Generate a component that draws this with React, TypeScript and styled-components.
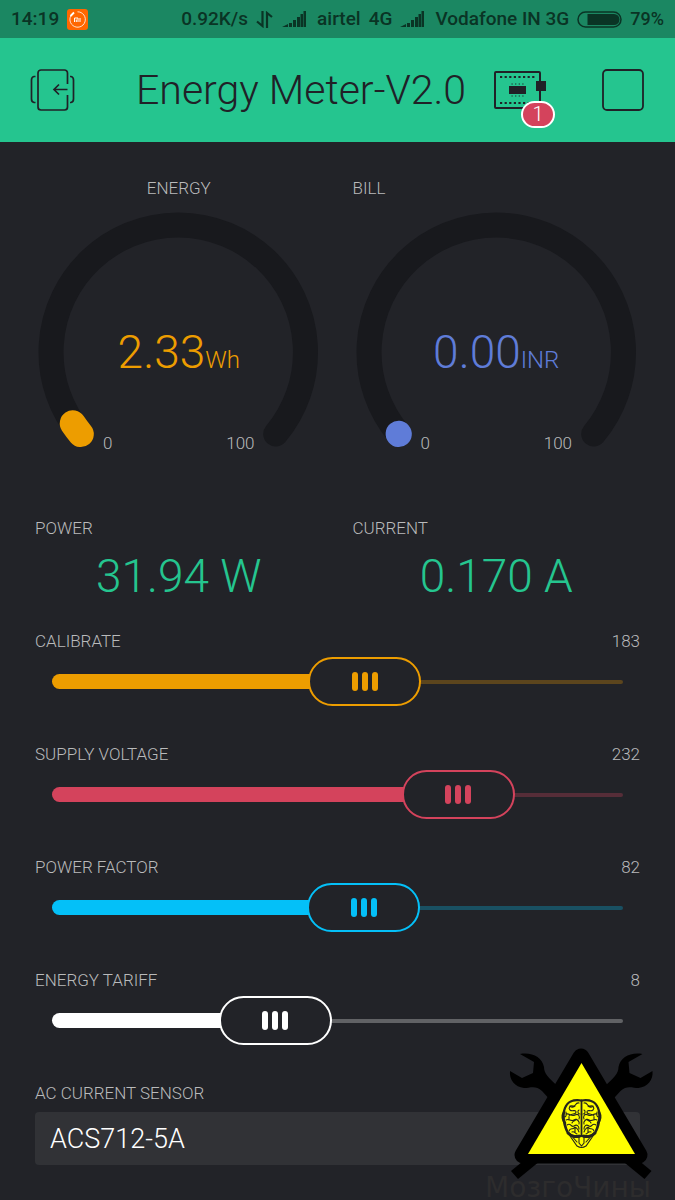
import React, { useState } from "react";
import styled, { createGlobalStyle } from "styled-components";

const GlobalStyle = createGlobalStyle`
  *, *::before, *::after { box-sizing: border-box; }
  body {
    margin: 0;
    background: #222328;
    font-family: Roboto, "Liberation Sans", sans-serif;
    font-weight: 300;
    color: #b9babb;
  }
  button { padding: 0; border: 0; background: none; color: inherit; font: inherit; cursor: pointer; }
`;

const Screen = styled.div`
  position: relative;
  min-height: 100vh;
  display: flex;
  flex-direction: column;
  overflow: hidden;
`;

const StatusBar = styled.div`
  display: flex;
  align-items: center;
  justify-content: space-between;
  height: 38px;
  padding: 0 11px;
  background: #1b8762;
  color: #0a3425;
  font-size: 19px;
  font-weight: 500;
  line-height: 24px;
  white-space: nowrap;
`;

const StatusGroup = styled.div`
  display: flex;
  align-items: center;
  gap: 8px;
  svg { display: block; flex: none; }
`;

const BatteryLevel = styled.span`
  font-size: 18px;
`;

const Header = styled.header`
  display: flex;
  align-items: center;
  height: 104px;
  padding: 0 31px 0 30px;
  background: #25c58f;
  color: #202127;
  svg { display: block; }
`;

const Title = styled.h1`
  flex: 1;
  margin: 0;
  text-align: right;
  font-size: 41px;
  line-height: 56px;
  font-weight: 300;
  white-space: nowrap;
`;

const HeaderButton = styled.button`
  flex: none;
`;

const DeviceButton = styled.button`
  position: relative;
  flex: none;
  margin: 0 56px 0 28px;
`;

const Badge = styled.span`
  position: absolute;
  right: -9px;
  bottom: -19px;
  width: 34px;
  height: 27px;
  border: 2px solid #fff;
  border-radius: 14px;
  background: #d4435c;
  color: #fff;
  font-size: 20px;
  line-height: 23px;
  text-align: center;
`;

const Main = styled.main`
  flex: 1;
  padding: 32px 35px 0;
`;

const Pair = styled.div`
  display: grid;
  grid-template-columns: 1fr 1fr;
  column-gap: 30px;
`;

const Label = styled.div<{ $center?: boolean }>`
  font-size: 17px;
  line-height: 28px;
  text-align: ${(p) => (p.$center ? "center" : "left")};
`;

const GaugeBox = styled.section`
  height: 340px;
`;

const Dial = styled.div`
  display: grid;
  padding-top: 10px;
  > * { grid-area: 1 / 1; }
  svg { display: block; width: 100%; }
`;

const Reading = styled.div<{ $color: string }>`
  align-self: center;
  padding-top: 42px;
  text-align: center;
  color: ${(p) => p.$color};
  font-size: 46px;
  line-height: 56px;
  white-space: nowrap;
  small { font-size: 24px; }
`;

const Scale = styled.div`
  align-self: end;
  display: flex;
  justify-content: space-between;
  padding: 0 68px 2px;
  font-size: 17px;
  line-height: 24px;
`;

const ValueBox = styled.section`
  height: 113px;
`;

const Value = styled.div`
  padding-top: 4px;
  text-align: center;
  color: #25c58f;
  font-size: 46px;
  line-height: 60px;
  white-space: nowrap;
`;

const SliderBox = styled.section`
  height: 113px;
`;

const SliderHead = styled.div`
  display: flex;
  justify-content: space-between;
  font-size: 17px;
  line-height: 28px;
`;

const Track = styled.div`
  display: grid;
  align-items: center;
  margin: 2px 17px 0;
  > * { grid-area: 1 / 1; }
`;

const Rail = styled.span<{ $color: string }>`
  height: 4px;
  border-radius: 2px;
  background: ${(p) => p.$color};
`;

const Fill = styled.span<{ $color: string }>`
  height: 15px;
  border-radius: 8px;
  background: ${(p) => p.$color};
`;

const Range = styled.input<{ $color: string }>`
  appearance: none;
  width: 100%;
  height: 49px;
  margin: 0;
  background: transparent;
  cursor: pointer;
  &::-webkit-slider-thumb {
    appearance: none;
    width: 113px;
    height: 49px;
    border: 2px solid ${(p) => p.$color};
    border-radius: 25px;
    background: #222328;
  }
  &::-moz-range-thumb {
    width: 113px;
    height: 49px;
    border: 2px solid ${(p) => p.$color};
    border-radius: 25px;
    background: #222328;
  }
`;

const Grip = styled.span<{ $color: string }>`
  z-index: 1;
  display: flex;
  justify-content: center;
  gap: 4px;
  width: 113px;
  pointer-events: none;
  i {
    width: 6px;
    height: 19px;
    border-radius: 3px;
    background: ${(p) => p.$color};
  }
`;

const SelectLabel = styled.label`
  display: block;
  font-size: 17px;
  line-height: 28px;
`;

const Select = styled.select`
  appearance: none;
  display: block;
  width: 100%;
  height: 53px;
  margin-top: 5px;
  padding: 0 15px;
  border: 0;
  border-radius: 4px;
  background: #313236;
  color: #fff;
  font: inherit;
  font-size: 27px;
`;

const Stamp = styled.div`
  position: absolute;
  right: 0;
  bottom: 0;
  width: 195px;
  height: 160px;
  pointer-events: none;
  svg { display: block; }
`;

const StampText = styled.div`
  position: absolute;
  left: 5px;
  bottom: 0;
  color: #2d2c2d;
  font-family: "DejaVu Sans", sans-serif;
  font-weight: 400;
  font-size: 28px;
  line-height: 24px;
  white-space: nowrap;
`;

const Signal = () => (
  <svg width="27" height="17" viewBox="0 0 27 17" fill="currentColor" aria-hidden="true">
    <path d="M0 16L6 13V16ZM7 12h3v4H7ZM11 9h3v7h-3ZM15 6h3v10h-3ZM18.500 3h2.500v13h-2.500ZM21.500 0h2.500v16h-2.500Z" />
  </svg>
);

const polar = (deg: number) => {
  const a = (deg * Math.PI) / 180;
  return `${143 + 127 * Math.cos(a)} ${140 + 127 * Math.sin(a)}`;
};

type GaugeProps = { label: string; value: string; unit: string; color: string; sweep: number; centered?: boolean };

function Gauge({ label, value, unit, color, sweep, centered }: GaugeProps) {
  const start = 140;
  return (
    <GaugeBox>
      <Label $center={centered}>{label}</Label>
      <Dial>
        <svg viewBox="0 0 287 245" fill="none" strokeWidth="25" strokeLinecap="round" aria-hidden="true">
          <path d={`M${polar(start)}A127 127 0 1 1 ${polar(40)}`} stroke="#18191d" />
          <path d={`M${polar(start)}A127 127 0 0 1 ${polar(start + sweep)}`} stroke={color} strokeWidth="26" />
        </svg>
        <Reading $color={color}>{value}<small>{unit}</small></Reading>
        <Scale><span>0</span><span>100</span></Scale>
      </Dial>
    </GaugeBox>
  );
}

type SliderProps = { id: string; label: string; initial: number; max: number; color: string; dim: string };

function Slider({ id, label, initial, max, color, dim }: SliderProps) {
  const [value, setValue] = useState(initial);
  const offset = `calc((100% - 113px) * ${value / max})`;
  return (
    <SliderBox>
      <SliderHead>
        <label htmlFor={id}>{label}</label>
        <output htmlFor={id}>{value}</output>
      </SliderHead>
      <Track>
        <Rail $color={dim} />
        <Fill $color={color} style={{ width: `calc(${offset} + 12px)` }} />
        <Range id={id} type="range" min={0} max={max} value={value} $color={color}
          onChange={(e) => setValue(Number(e.target.value))} />
        <Grip $color={color} style={{ marginLeft: offset }}><i /><i /><i /></Grip>
      </Track>
    </SliderBox>
  );
}

const BrainHalf = () => (
  <g>
    <path d="M101.500 60.500C93 59 87 62 85 68C82 75 84 87 88 93C91 97 97 98 101 96" strokeWidth="2.200" />
    <path d="M84 72C82 76 83 80 85 83" strokeWidth="2.600" />
    <path d="M88 93C92 97 97 97 99 96" strokeWidth="3" />
    <path d="M99 63c-4-1-3 4-6 3s-5 2-3 4 6-1 6 2-5 1-7 4M99 70c-2 1-1 4 1 4M86 74c4-1 5 3 9 1s5 2 4 4M86 80c3-2 5 2 8 0s6 2 5 4M87 85c4-3 4 3 7 1s5 0 5 3M89 91c1-4 4-1 5-3s4 1 5 4M92 92c2-1 3 1 5 2M90 66c1 2 4 1 5 0M84 77c3 0 2-3 2-5M96 79c-1 3-3 1-4 4M89 77v3M95 88v4" />
  </g>
);

export default function App() {
  return (
    <Screen>
      <GlobalStyle />
      <StatusBar>
        <StatusGroup>
          <span>14:19</span>
          <svg width="21" height="21" viewBox="0 0 21 21" fill="none" stroke="#fff" aria-hidden="true">
            <rect width="21" height="21" rx="3" fill="#ff6700" stroke="none" />
            <path d="M6.500 4A7.700 7.700 0 1 0 10.500 2.800" strokeWidth=".8" />
            <path d="M3.500 7L7 3.500" strokeWidth="1.800" />
            <path d="M7.500 13V9h3.500v4M9.300 10.500V13M13 9v4" />
          </svg>
        </StatusGroup>
        <StatusGroup>
          <span>0.92K/s</span>
          <svg width="18" height="17" viewBox="0 0 18 17" fill="none" stroke="currentColor" strokeWidth="2.200" aria-hidden="true">
            <path d="M6.500 0V15L1 10.500M11 17V2L16 6" />
          </svg>
          <Signal />
          <span>airtel</span>
          <span>4G</span>
          <Signal />
          <span>Vodafone IN 3G</span>
          <svg width="45" height="17" viewBox="0 0 45 17" aria-hidden="true">
            <rect x="1" y="1" width="43" height="15" rx="7.500" fill="none" stroke="currentColor" strokeWidth="1.500" />
            <path d="M10.500 3H37a5.500 5.500 0 0 1 0 11H10.500Z" fill="currentColor" />
          </svg>
          <BatteryLevel>79%</BatteryLevel>
        </StatusGroup>
      </StatusBar>

      <Header>
        <HeaderButton type="button" aria-label="Exit project">
          <svg width="46" height="42" viewBox="0 0 46 42" fill="none" stroke="currentColor" strokeWidth="1.700">
            <path d="M37.500 15V4a3 3 0 0 0-3-3H11a3 3 0 0 0-3 3v34a3 3 0 0 0 3 3h23.500a3 3 0 0 0 3-3V26M37.500 20.500H24M29 15.500l-5 5 5 5" />
            <path d="M5.500 7.500H4Q1.500 8 1.500 11V30Q1.500 33 4 33.500H5.500M40 7.500H41Q43.500 8 43.500 11V30Q43.500 33 41 33.500H40" />
          </svg>
        </HeaderButton>
        <Title>Energy Meter-V2.0</Title>
        <DeviceButton type="button" aria-label="Devices">
          <svg width="52" height="38" viewBox="0 0 52 38" fill="none" stroke="currentColor">
            <rect x="1" y="1" width="45" height="36" rx="1" strokeWidth="2" />
            <path d="M6 6H42M6 32H42" strokeWidth="2" strokeDasharray="2.200 2.400" />
            <path d="M15 15h17v8H15ZM42 10h10v10H42Z" fill="currentColor" stroke="none" />
            <path d="M17.500 13H30M17.500 25H30" strokeDasharray="1.200 2.400" strokeWidth="1.200" />
          </svg>
          <Badge>1</Badge>
        </DeviceButton>
        <HeaderButton type="button" aria-label="Stop">
          <svg width="42" height="42" viewBox="0 0 42 42" fill="none" stroke="currentColor" strokeWidth="1.800">
            <rect x="1" y="1" width="40" height="40" rx="4" />
          </svg>
        </HeaderButton>
      </Header>

      <Main>
        <Pair>
          <Gauge label="ENERGY" value="2.33" unit="Wh" color="#ed9d00" sweep={6} centered />
          <Gauge label="BILL" value="0.00" unit="INR" color="#5f7cd8" sweep={0.1} />
        </Pair>
        <Pair>
          <ValueBox>
            <Label>POWER</Label>
            <Value>31.94 W</Value>
          </ValueBox>
          <ValueBox>
            <Label>CURRENT</Label>
            <Value>0.170 A</Value>
          </ValueBox>
        </Pair>
        <Slider id="calibrate" label="CALIBRATE" initial={183} max={327} color="#ed9d00" dim="#5c451d" />
        <Slider id="voltage" label="SUPPLY VOLTAGE" initial={232} max={304} color="#d4435c" dim="#562d38" />
        <Slider id="factor" label="POWER FACTOR" initial={82} max={147} color="#04c0f8" dim="#195062" />
        <Slider id="tariff" label="ENERGY TARIFF" initial={8} max={22} color="#ffffff" dim="#616265" />
        <SelectLabel htmlFor="sensor">AC CURRENT SENSOR</SelectLabel>
        <Select id="sensor" defaultValue="ACS712-5A">
          <option>ACS712-5A</option>
        </Select>
      </Main>

      <Stamp>
        <StampText>МозгоЧины</StampText>
        <svg width="195" height="160" viewBox="0 0 195 160" aria-hidden="true">
          <g id="wrench">
            <path d="M40 14C52 12 62 17 64 27C64 33 68 38 80 48L72 62L62 51C56 45 50 48 44 48C35 47 29 40 30 31L42 38L53 33L54 22Z" />
            <path d="M31 131L48 117L60 121L38 139Z" />
          </g>
          <use href="#wrench" transform="matrix(-1 0 0 1 202.500 0)" />
          <path d="M101 17L159 115H43Z" stroke="#000" strokeWidth="17" strokeLinejoin="round" />
          <path d="M101.500 23L155 114H48Z" fill="#ff0" />
          <g fill="none" stroke="#25251c" strokeWidth="1.100" strokeLinecap="round">
            <BrainHalf />
            <g transform="matrix(-1 0 0 1 203 0)"><BrainHalf /></g>
            <path d="M101.500 61V95" strokeWidth="1.800" />
            <path d="M85 83L88 93 97 106Q101.500 109 106 106L115 93 118 83M99 96V103L101.500 106 104 103V96M89 93L97 102M114 93L106 102" />
          </g>
        </svg>
      </Stamp>
    </Screen>
  );
}
